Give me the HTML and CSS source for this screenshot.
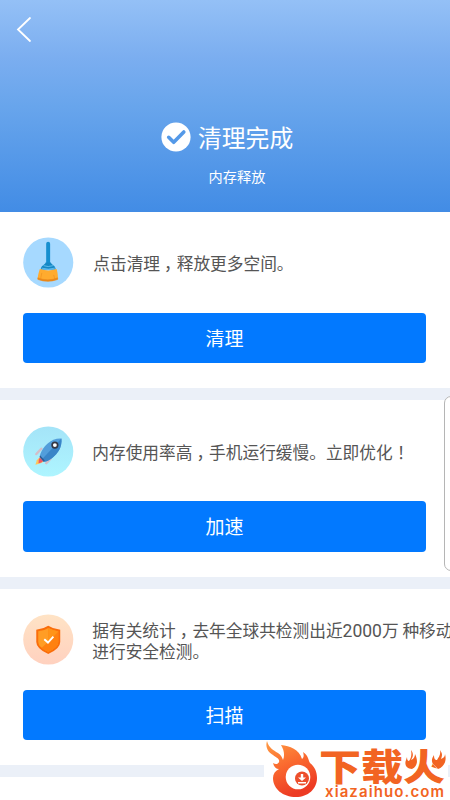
FILE: index.html
```
<!DOCTYPE html>
<html lang="zh-CN">
<head>
<meta charset="utf-8">
<title>清理完成</title>
<link rel="stylesheet" href="styles.css">
</head>
<body>
<div class="screen">
  <header class="hero">
    <svg class="back" width="16" height="28" viewBox="0 0 16 28"><path d="M14 2 2 13.500 14 25"/></svg>
    <div class="result">
      <svg width="30" height="30" viewBox="0 0 30 30"><circle cx="15" cy="15" r="14.6" fill="#fff"/><path d="M7.7 15.3 12.7 20.3 22.8 10" fill="none" stroke="#5499e8" stroke-width="3.6" stroke-linecap="round" stroke-linejoin="round"/></svg>
      <h1>清理完成</h1>
    </div>
    <p class="subtitle">内存释放</p>
  </header>

  <main>
    <section class="card">
      <div class="info">
        <svg class="icon" viewBox="0 0 51 51">
          <circle cx="25.5" cy="25.5" r="25.3" fill="#a6d9ff"/>
          <path d="M25.4 6.5V27" stroke="#168fcf" stroke-width="4" stroke-linecap="round"/>
          <path d="M22.8 25.500h5.400c.6 2.700 4.800 2.800 4.800 7H18c0-4.200 4.200-4.300 4.800-7z" fill="#1688c5"/>
          <path d="M20.800 28.700q4.700 1.800 9.400 0M18.800 31.200q6.700 2 13.400 0" fill="none" stroke="#71c8f4" stroke-width=".8"/>
          <path d="M17 32q8.500 3 17 0c1 4 1.400 7 1.200 10q-9.700 4.800-20.400 0c.2-3 .9-6 2.200-10z" fill="#ffab2e"/>
          <path d="M15 41q10 4 20 0v1.600q-10 3.800-20 0zM19 36l-1 5M31 38l1 4" fill="#e98518" stroke="#ed8d1d" stroke-width=".6"/>
        </svg>
        <p>点击清理<span class="comma">，</span>释放更多空间。</p>
      </div>
      <button>清理</button>
    </section>

    <section class="card">
      <div class="info">
        <svg class="icon" viewBox="0 0 51 51">
          <defs><linearGradient id="sky" x2="0" y2="1"><stop stop-color="#a4e4f8"/><stop offset="1" stop-color="#aef5ff"/></linearGradient></defs>
          <circle cx="25.500" cy="25.500" r="25.3" fill="url(#sky)"/>
          <path d="m13.500 28 5-5.300M23.500 37.300l4.500-4.800" stroke="#d3bec9" stroke-width="2.500" stroke-linecap="round"/>
          <path d="M16.500 31.500 21 35.700l-3.800 2-4.700 1.300 1.500-4.600z" fill="#ffc45a"/>
          <path d="m17 31.500 3.700 3.400-2.200 1.800-2.800.6.200-3.500z" fill="#ef5666"/>
          <path d="M38.800 12.300c.8 8.200-3.100 14.800-9.300 19.700-3 2.300-6 3.600-8.500 3.800L16.800 31c.4-4.300 3.700-9.700 7.800-13.400 4.200-3.700 8.700-5.600 14.200-5.300z" fill="#529edb"/>
          <path d="M38.800 12.300c.8 8.200-3.100 14.800-9.300 19.700-3 2.300-6 3.600-8.500 3.800l-2-2.300z" fill="#3985c8"/>
          <path d="m16.800 31 4.200 4.800 1-1.200-4.600-5z" fill="#315c8f"/>
          <circle cx="32.200" cy="19" r="2.800" fill="#fff" stroke="#343744" stroke-width="1.700"/>
        </svg>
        <p>内存使用率高<span class="comma">，</span>手机运行缓慢。立即优化<span class="mid" lang="zh-TW">！</span></p>
      </div>
      <button>加速</button>
    </section>

    <section class="card">
      <div class="info">
        <svg class="icon" viewBox="0 0 51 51">
          <defs><linearGradient id="peach" x2="0" y2="1"><stop stop-color="#ffe3c5"/><stop offset="1" stop-color="#ffd1bf"/></linearGradient></defs>
          <circle cx="25.500" cy="25.500" r="25.3" fill="url(#peach)"/>
          <path d="M25.500 12.800c3.400 2.300 7 3.400 11.100 3.700v11.500c0 5-4.500 8-11.100 11-6.600-3-11.100-6-11.100-11V16.500c4.100-.3 7.700-1.400 11.100-3.700z" fill="#ff9d25" stroke="#fa6d0a" stroke-width="2"/>
          <path d="M25.500 13.900v13.900l-6.800 6.300c1.800 1.400 4 2.600 6.800 3.800 6-2.700 10.100-5.400 10.100-9.900V17.500c-3.800-.4-7-1.500-10.100-3.600z" fill="#ff8110"/>
          <path d="m25.500 13.900 10 3.800-10 10z" fill="#ff9418"/>
          <path d="m21.500 25.300 3.700 3.300 5.500-6" fill="none" stroke="#fff" stroke-width="1.900"/>
        </svg>
        <p>据有关统计<span class="comma">，</span>去年全球共检测出近<span class="number">2000</span>万 种移动<br>进行安全检测。</p>
      </div>
      <button>扫描</button>
    </section>
  </main>

  <aside class="side-panel"></aside>
  <div class="watermark">
    <svg class="flame" width="55" height="59" viewBox="0 0 55 59">
      <defs><linearGradient id="fire" x2=".4" y2="1"><stop stop-color="#ff9b43"/><stop offset=".5" stop-color="#fa692f"/><stop offset="1" stop-color="#ed3b23"/></linearGradient></defs>
      <path d="M3 0C5 7 9 9 14 12c3 2 4 4 5 7 2-5 1-10-2-15 9 1 18 4 21 14 2-1 2-4 1-7 6 4 5 8 7 11 5 4 7 9 7 15 0 11-9 19-21 19C19 56 9 48 9 37c0-4 2-7 6-9-3 0-5-2-6-6 3 2 5 1 6-1 1-3-2-4-6-7C4 11 1 6 3 0z" fill="url(#fire)"/>
      <circle cx="34" cy="36" r="12.300" fill="#fff"/>
      <circle cx="38" cy="37.500" r="7" fill="#ed4f2c"/>
      <path d="M36.800 33h2.400v3.500H42L38 40l-4-3.500h2.800zM34 41h8v1.500h-8z" fill="#fff"/>
    </svg>
    <div class="brand">
      <div class="brand-name">下载火</div>
      <div class="domain">xiazaihuo.com</div>
    </div>
    <svg class="sparks" width="44" height="26" viewBox="0 0 44 26">
      <path d="M0 0h14v21l-6 5H0zM27 0h17v26h-8l-9-10z" fill="#fff"/>
      <path d="M7 4c3 4 2 7 0 10 3-1 4-4 4-6 3 6 3 12-3 15-5 0-8-4-6-9l1-3c0 3 1 4 2 4 2-3 3-6 2-11zM36 4c3 4 2 6 1 9 3-1 4-3 4-5 2 7-1 13-7 15l-5-5c-2-3-1-6 1-9 0 4 1 5 3 5 2-3 4-6 3-10z" fill="#f26422"/>
    </svg>
  </div>
</div>
</body>
</html>
```

FILE: styles.css
```
* { box-sizing: border-box; }
body, h1, p { margin: 0; }
body {
  font-family: "Noto Sans CJK SC", sans-serif;
  background: #fff;
}
.screen {
  position: relative;
  width: 450px;
  height: 800px;
  overflow: hidden;
}
.hero {
  height: 211.500px;
  padding: 16px;
  color: #fff;
  background: linear-gradient(#94c0f6, #7baef0 27%, #68a5ec 50%, #428ce5);
  display: flex;
  flex-direction: column;
}
.back {
  fill: none;
  stroke: #fff;
  stroke-width: 1.8;
  stroke-linecap: round;
}
.result {
  margin-top: 74px;
  height: 38px;
  padding-left: 145px;
  display: flex;
  align-items: center;
  gap: 7px;
}
h1 { font-size: 23.800px; font-weight: 400; line-height: 38px; }
.subtitle {
  margin-top: 9px;
  padding-left: 24px;
  text-align: center;
  font-size: 14.200px;
  line-height: 22px;
}
main { display: flex; flex-direction: column; }
.card {
  height: 188.600px;
  padding: 25.500px 24.500px 0 23.300px;
  border-bottom: 12px solid #ebf0f8;
  display: flex;
  flex-direction: column;
}
.info {
  height: 51px;
  display: flex;
  align-items: center;
  gap: 18.500px;
  color: #555;
  font-size: 16.700px;
  line-height: 20.500px;
  white-space: nowrap;
}
.card:first-child .info { gap: 19.500px; }
.info p { padding-top: 2px; }
.icon { width: 50.500px; height: 51px; flex: none; }
.comma { margin: 0 -4px 0 4px; }
.mid { font-family: "Noto Sans CJK TC", sans-serif; }
.number { font-family: Roboto, sans-serif; font-size: 17.500px; }
button {
  margin-top: 24.500px;
  height: 50.500px;
  border: 0;
  border-radius: 4px;
  background: #0279ff;
  color: #fff;
  font: 400 19px/50px "Noto Sans CJK SC", sans-serif;
  padding: 0;
}
.side-panel {
  position: absolute;
  left: 444px;
  top: 396px;
  width: 20px;
  height: 175px;
  border: 1px solid #b5b5b5;
  border-radius: 7px;
  background: #fff;
}
.watermark {
  position: absolute;
  left: 264px;
  top: 741px;
  width: 184px;
  height: 59px;
  background: #fff;
  color: #f26422;
  display: flex;
}
.flame { flex: none; }
.brand { width: 129px; }
.brand-name {
  height: 44px;
  font-size: 42px;
  font-weight: 900;
  line-height: 50px;
  white-space: nowrap;
  transform: scaleY(.88);
}
.domain {
  padding-left: 6px;
  font: 600 15px/14px Inter, sans-serif;
  letter-spacing: 1.100px;
}
.sparks { position: absolute; left: 140px; top: 5px; }
```
